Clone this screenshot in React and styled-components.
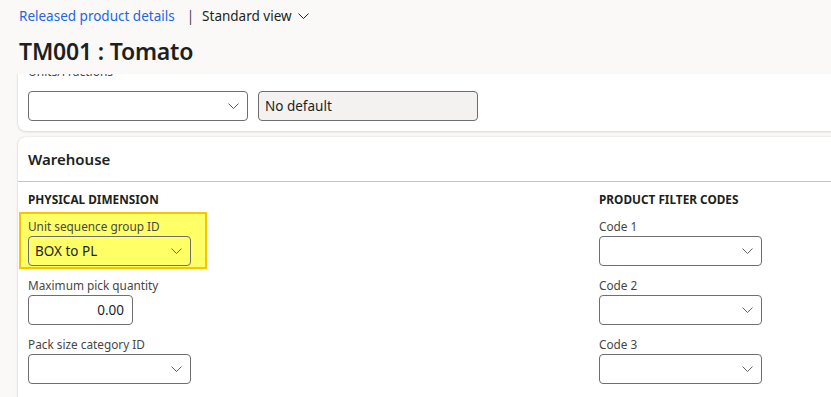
import React from "react";
import styled, { createGlobalStyle } from "styled-components";

const GlobalStyle = createGlobalStyle`
	html, body {
		margin: 0;
		padding: 0;
		background: #faf9f8;
		overflow: hidden;
	}
	body {
		font-family: "Segoe UI", "Noto Sans", "Open Sans", sans-serif;
		color: #201f1e;
	}
`;

const Page = styled.div`
	width: 831px;
	height: 397px;
	display: flex;
	flex-direction: column;
	background: #faf9f8;
	overflow: hidden;
`;

const Header = styled.header`
	position: relative;
	z-index: 2;
	height: 74px;
	flex-shrink: 0;
	background: #faf9f8;
	padding: 5px 0 0 19px;
	box-sizing: border-box;
`;

const Breadcrumb = styled.div`
	display: flex;
	align-items: center;
	height: 22px;
	font-size: 13.5px;
`;

const CrumbLink = styled.a`
	color: #2266e3;
	text-decoration: none;
`;

const Pipe = styled.span`
	margin: 0 8px 0 12px;
	color: #484644;
`;

const ViewPicker = styled.span`
	display: flex;
	align-items: center;
	gap: 6px;
	color: #201f1e;
`;

const Title = styled.h1`
	margin: 9px 0 0;
	font-size: 23px;
	font-weight: 600;
	line-height: 30px;
	letter-spacing: -0.2px;
`;

const Viewport = styled.div`
	flex: 1;
	overflow: hidden;
	padding-left: 18px;
`;

const Card = styled.section`
	background: #fff;
	border-radius: 8px 0 0 8px;
	box-shadow: 0 0 2px rgba(0, 0, 0, 0.12), 0 1px 3px rgba(0, 0, 0, 0.1);
	margin-top: ${(p) => p.$top || 0}px;
	margin-right: -20px;
`;

const CardBody = styled.div`
	padding: 12px 10px 10px;
`;

const GroupLabel = styled.div`
	font-size: 12px;
	line-height: 16px;
	color: #484644;
	margin-bottom: 11px;
`;

const Row = styled.div`
	display: flex;
	gap: 10px;
`;

const CardHeader = styled.div`
	height: 44px;
	display: flex;
	align-items: center;
	padding-left: 10px;
	font-size: 15px;
	font-weight: 600;
	border-bottom: 1px solid #c8c6c4;
`;

const Columns = styled.div`
	display: grid;
	grid-template-columns: 571px 1fr;
	padding: 7px 10px 30px;
`;

const Column = styled.div`
	display: flex;
	flex-direction: column;
`;

const SectionTitle = styled.div`
	font-size: 11.8px;
	font-weight: 700;
	line-height: 20px;
	margin-bottom: 7px;
	color: #201f1e;
`;

const Field = styled.div`
	display: flex;
	flex-direction: column;
	align-self: flex-start;
	margin-bottom: 9px;
	${(p) =>
		p.$highlight &&
		`
		margin: -4px 0 6px -9px;
		padding: 2px 14px 1px 7px;
		border: 2px solid #f7c600;
		background: #ffff66;
	`}
`;

const Label = styled.label`
	font-size: 11.8px;
	line-height: 20px;
	color: #484644;
`;

const Control = styled.div`
	box-sizing: border-box;
	width: ${(p) => p.$w}px;
	height: 30px;
	border: 1px solid #6e6e6e;
	border-radius: 4px;
	background: ${(p) => (p.$readonly ? "#f3f2f1" : p.$clear ? "transparent" : "#fff")};
	display: flex;
	align-items: center;
	justify-content: ${(p) => (p.$right ? "flex-end" : "space-between")};
	padding: 0 8px 0 6px;
	font-size: 13.5px;
	color: #201f1e;
`;

const Chevron = ({ size = 11, color = "#605e5c" }) => (
	<svg width={size} height={size * 0.6} viewBox="0 0 11 6.5" fill="none">
		<path d="M0.5 0.5 L5.5 5.5 L10.5 0.5" stroke={color} strokeWidth="1" />
	</svg>
);

const Dropdown = ({ w, value, clear }) => (
	<Control $w={w} $clear={clear}>
		<span>{value}</span>
		<Chevron />
	</Control>
);

const App = () => {
	return (
		<Page>
			<GlobalStyle />
			<Header>
				<Breadcrumb>
					<CrumbLink href="#">Released product details</CrumbLink>
					<Pipe>|</Pipe>
					<ViewPicker>
						Standard view
						<Chevron size={11} color="#201f1e" />
					</ViewPicker>
				</Breadcrumb>
				<Title>TM001 : Tomato</Title>
			</Header>
			<Viewport>
				<Card $top={-22}>
					<CardBody>
						<GroupLabel>Units/Fractions</GroupLabel>
						<Row>
							<Dropdown w={220} />
							<Control $w={220} $readonly>
								No default
							</Control>
						</Row>
					</CardBody>
				</Card>
				<Card $top={6}>
					<CardHeader>Warehouse</CardHeader>
					<Columns>
						<Column>
							<SectionTitle>PHYSICAL DIMENSION</SectionTitle>
							<Field $highlight>
								<Label>Unit sequence group ID</Label>
								<Dropdown w={163} value="BOX to PL" clear />
							</Field>
							<Field>
								<Label>Maximum pick quantity</Label>
								<Control $w={105} $right>
									0.00
								</Control>
							</Field>
							<Field>
								<Label>Pack size category ID</Label>
								<Dropdown w={163} />
							</Field>
						</Column>
						<Column>
							<SectionTitle>PRODUCT FILTER CODES</SectionTitle>
							<Field>
								<Label>Code 1</Label>
								<Dropdown w={163} />
							</Field>
							<Field>
								<Label>Code 2</Label>
								<Dropdown w={163} />
							</Field>
							<Field>
								<Label>Code 3</Label>
								<Dropdown w={163} />
							</Field>
						</Column>
					</Columns>
				</Card>
			</Viewport>
		</Page>
	);
};

export default App;
